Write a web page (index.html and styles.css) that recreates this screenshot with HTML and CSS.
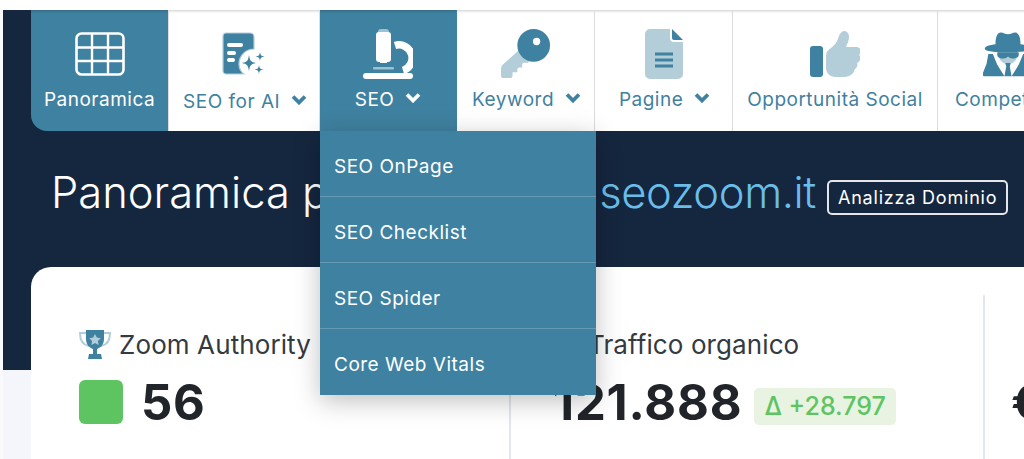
FILE: index.html
```html
<!DOCTYPE html>
<html lang="it">
<head>
	<meta charset="utf-8">
	<title>Panoramica</title>
	<link rel="stylesheet" href="styles.css">
</head>
<body>
	<div class="main">
		<!--menu principale-->
		<div class="nav">
			<a class="nav-item nav-first is-active" href="#">
				<svg class="nav-icon" viewBox="0 0 50 44"><rect x="1.5" y="1.5" width="47" height="41" rx="5" fill="none" stroke="#fff" stroke-width="2.6"/><path d="M17 2v40M33 2v40M2 15.5h46M2 29h46" stroke="#fff" stroke-width="2.4" fill="none"/></svg>
				<span class="nav-label">Panoramica</span>
			</a>
			<a class="nav-item nav-ai" href="#">
				<svg class="nav-icon" viewBox="0 0 44 44"><path d="M4 1h24a4 4 0 0 1 4 4v12a15 15 0 0 0-15 15c0 4 2 8 5 10H4a3 3 0 0 1-3-3V4a3 3 0 0 1 3-3z" fill="#3f81a0" stroke="#b3cdd9" stroke-width="1.2"/><rect x="5" y="11" width="16" height="4" rx="2" fill="#fff"/><rect x="5" y="19" width="9" height="4" rx="2" fill="#fff"/><rect x="5" y="26" width="8" height="4" rx="2" fill="#fff"/><path d="M27 23c1 6 2 7 7 8-5 1-6 2-7 8-1-6-2-7-7-8 5-1 6-2 7-8z" fill="#3f81a0"/><path d="M38 20c.6 3.500 1 4 4.500 4.500-3.500.5-3.900 1-4.500 4.500-.6-3.500-1-4-4.500-4.500 3.500-.5 3.900-1 4.500-4.500zM37 33c.6 3.500 1 4 4.500 4.500-3.500.5-3.900 1-4.500 4.500-.6-3.500-1-4-4.500-4.500 3.500-.5 3.900-1 4.500-4.500z" fill="#3f81a0"/></svg>
				<span class="nav-label">SEO for AI <svg class="chev" viewBox="0 0 16 11"><path d="M2 2.500l6 6 6-6" fill="none" stroke="currentColor" stroke-width="3.800"/></svg></span>
			</a>
			<a class="nav-item nav-seo is-active" href="#">
				<svg class="nav-icon nav-icon-tall" viewBox="0 0 50 50"><rect x="15" y="0" width="11" height="8" rx="3" fill="#9fc0cf"/><path d="M13 6a3 3 0 0 1 3-3h9a3 3 0 0 1 3 3v24a3 3 0 0 1-3 3h-1v1h-7v-1h-1a3 3 0 0 1-3-3z" fill="#fff"/><path d="M32 16.500a13 13 0 0 1 8 25" fill="none" stroke="#fff" stroke-width="7.500"/><rect x="10" y="38" width="21" height="2.500" rx="1" fill="#9fc0cf"/><rect x="0" y="44" width="50" height="6" rx="3" fill="#fff"/></svg>
				<span class="nav-label">SEO <svg class="chev" viewBox="0 0 16 11"><path d="M2 2.500l6 6 6-6" fill="none" stroke="currentColor" stroke-width="3.800"/></svg></span>
			</a>
			<a class="nav-item nav-kw" href="#">
				<svg class="nav-icon nav-icon-tall" viewBox="0 0 52 52"><path d="M22 19L2 37a5 5 0 0 0-2 4v8a2 2 0 0 0 2 2h7a3 3 0 0 0 3-3v-3h5v-3a2 2 0 0 1 2-2h3v-3a2 2 0 0 1 2-2h4l5-5z" fill="#b3cdd9"/><circle cx="34" cy="17" r="17" fill="#3f81a0"/><circle cx="37" cy="13" r="3.800" fill="#fff"/></svg>
				<span class="nav-label">Keyword <svg class="chev" viewBox="0 0 16 11"><path d="M2 2.500l6 6 6-6" fill="none" stroke="currentColor" stroke-width="3.800"/></svg></span>
			</a>
			<a class="nav-item nav-pag" href="#">
				<svg class="nav-icon nav-icon-tall" viewBox="0 0 38 50"><path d="M5 0h20v9a4 4 0 0 0 4 4h9v32a5 5 0 0 1-5 5H5a5 5 0 0 1-5-5V5a5 5 0 0 1 5-5z" fill="#b3cdd9"/><path d="M27 0l11 11H29a2 2 0 0 1-2-2z" fill="#3f81a0"/><path d="M10 25h18M10 31h18M10 37h18" stroke="#3f81a0" stroke-width="3" fill="none"/></svg>
				<span class="nav-label">Pagine <svg class="chev" viewBox="0 0 16 11"><path d="M2 2.500l6 6 6-6" fill="none" stroke="currentColor" stroke-width="3.800"/></svg></span>
			</a>
			<a class="nav-item nav-soc" href="#">
				<svg class="nav-icon nav-icon-tall" viewBox="0 0 50 46"><rect x="0" y="15" width="13" height="31" rx="3" fill="#3f81a0"/><path d="M16 25c0-4 2-6 5-8 4-3 6-6 8-12 1-3 3-5 6-5 3 1 4 3 4 6 0 4-2 7-3 10h10c3 0 5 2 5 4s-1 3-2 4c1 1 2 2 1 4 0 2-1 3-3 4 1 2 0 5-2 6-1 1-1 4-3 5-2 2-5 3-8 3h-8c-6 0-10-4-10-9z" fill="#b3cdd9"/></svg>
				<span class="nav-label">Opportunità Social</span>
			</a>
			<a class="nav-item nav-comp" href="#">
				<svg class="nav-icon nav-icon-tall" viewBox="0 0 56 50"><path d="M14 14c0-8 2-13 6-13 3 0 5 2 8 2s5-2 8-2c4 0 6 5 6 13 6 1 12 2 12 5s-12 4-26 4S2 22 2 19s6-4 12-5z" fill="#3f81a0"/><path d="M17 23h22c0 8-4 13-11 13s-11-5-11-13z" fill="#b3cdd9"/><path d="M16 23h24v3c0 3-4 4-7 4-3 0-4-2-5-2s-2 2-5 2c-3 0-7-1-7-4z" fill="#3f81a0"/><path d="M6 25l5 0 5 12 8 13H2c-2 0-3-2-2-4l4-10zM50 25h-5l-5 12-8 13h22c2 0 3-2 2-4l-4-10z" fill="#3f81a0"/><path d="M25 35h6l-1 4 2 11h-8l2-11z" fill="#3f81a0"/></svg>
				<span class="nav-label">Competitor</span>
			</a>

			<div class="drop">
				<a class="drop-item" href="#">SEO OnPage</a>
				<a class="drop-item" href="#">SEO Checklist</a>
				<a class="drop-item" href="#">SEO Spider</a>
				<a class="drop-item" href="#">Core Web Vitals</a>
			</div>
		</div>

		<div class="head">
			<h1 class="head-title">Panoramica per <span class="head-domain">www.seozoom.it</span></h1>
			<a class="head-btn" href="#">Analizza Dominio</a>
		</div>

		<div class="card">
			<div class="stat stat-first">
				<div class="stat-title">
					<svg class="trophy" viewBox="0 0 32 30"><path d="M7 3H1c0 8 3 12 9 13M25 3h6c0 8-3 12-9 13" fill="none" stroke="#b3cdd9" stroke-width="2"/><path d="M7 0h18v9c0 6-4 9-7 10v5h4l1 5H9l1-5h4v-5C11 18 7 15 7 9z" fill="#3f81a0"/><path d="M16 4l1.800 3.600 4 .6-2.900 2.800.7 4-3.600-1.900-3.600 1.900.7-4-2.900-2.800 4-.6z" fill="#b3cdd9"/></svg>
					Zoom Authority
				</div>
				<div class="stat-row">
					<span class="stat-square"></span>
					<span class="stat-value">56</span>
				</div>
			</div>
			<div class="stat stat-second">
				<div class="stat-title">
					<svg class="trophy" viewBox="0 0 32 30"><path d="M2 28L12 14l7 7L30 4" fill="none" stroke="#3f81a0" stroke-width="3"/></svg>
					Traffico organico
				</div>
				<div class="stat-row">
					<span class="stat-value">121.888</span>
					<span class="stat-delta">Δ +28.797</span>
				</div>
			</div>
			<div class="stat stat-third">
				<div class="stat-title">&nbsp;</div>
				<div class="stat-row">
					<span class="stat-value">€</span>
				</div>
			</div>
		</div>
	</div>
</body>
</html>
```

FILE: styles.css
```css
html,body{
	margin: 0;
	padding: 0;
	height: 100%;
	overflow: hidden;
}
body{
	background: #fff;
	font-family: Inter, "Liberation Sans", sans-serif;
	color: #212529;
}
a{
	text-decoration: none;
}
.main{
	margin: 10px 0 0 3px;
	height: 449px;
	padding-left: 28px;
	background: linear-gradient(#15263f 360px, #f5f6fb 360px);
	box-shadow: -3px 0 0 #fafafd;
}
.nav{
	display: flex;
	height: 121px;
	position: relative;
}
.nav-item{
	flex: none;
	box-sizing: border-box;
	display: flex;
	flex-direction: column;
	align-items: center;
	background: #fff;
	color: #3f81a0;
	border-right: 1px solid #ddd;
	box-shadow: inset 0 3px 3px -2px rgba(0,0,0,.2);
	padding-top: 22px;
	white-space: nowrap;
}
.nav-item.is-active{
	background: #3f81a0;
	color: #fff;
	border-right-color: #3f81a0;
}
.nav-first{
	width: 138px;
	border-bottom-left-radius: 16px;
}
.nav-item.nav-first{
	border-right-color: #ddd;
}
.nav-ai{
	width: 151px;
}
.nav-ai .nav-label{
	margin-top: 14px;
	padding-left: 2px;
}
.nav-seo{
	width: 137px;
}
.nav-kw,.nav-pag{
	width: 138px;
}
.nav-kw .nav-label,.nav-pag .nav-label{
	padding-left: 2px;
}
.nav-soc{
	width: 205px;
}
.nav-comp{
	width: 140px;
}
.nav-icon{
	width: 50px;
	height: 44px;
	flex: none;
}
.nav-icon-tall{
	height: 50px;
	margin-top: -3px;
}
.nav-label{
	margin-top: 12px;
	font-size: 19px;
	line-height: 24px;
	letter-spacing: .5px;
}
.nav-icon-tall + .nav-label{
	margin-top: 9px;
}
.chev{
	width: 16px;
	height: 11px;
	margin-left: 5px;
	vertical-align: 3px;
}
.drop{
	position: absolute;
	left: 289px;
	top: 121px;
	width: 276px;
	background: #3f81a0;
	box-shadow: 0 6px 24px rgba(0,0,0,.25);
	z-index: 10;
}
.drop-item{
	display: block;
	box-sizing: border-box;
	height: 66px;
	line-height: 72px;
	padding-left: 14px;
	font-size: 19px;
	letter-spacing: .5px;
	color: #fff;
	border-bottom: 1px solid #669ab3;
}
.drop-item:last-child{
	border-bottom: none;
}
.head{
	display: flex;
	align-items: center;
	box-sizing: border-box;
	height: 136px;
	padding: 0 0 14px 20px;
	gap: 11px;
}
.head-title{
	margin: 0;
	font-size: 43.5px;
	font-weight: 300;
	color: #fff;
	white-space: nowrap;
}
.head-domain{
	margin-left: 104px;
	letter-spacing: -.4px;
	color: #69bde8;
}
.head-btn{
	border: 2px solid #e4e6ea;
	border-radius: 5px;
	padding: 5px 9px;
	font-size: 18px;
	letter-spacing: .8px;
	color: #fff;
	white-space: nowrap;
	margin-top: 10px;
}
.card{
	display: flex;
	background: #fff;
	border-top-left-radius: 20px;
	height: 192px;
	padding-top: 28px;
	box-sizing: border-box;
	overflow: hidden;
}
.stat{
	flex: none;
	box-sizing: border-box;
	padding-top: 33px;
	border-left: 2px solid #e4e6ef;
}
.stat-first{
	width: 478px;
	padding-left: 48px;
	border-left: none;
}
.stat-second{
	width: 474px;
	padding-left: 42px;
}
.stat-second .stat-title{
	gap: 3px;
}
.stat-third{
	width: 200px;
	padding-left: 26px;
}
.stat-title{
	display: flex;
	align-items: center;
	gap: 8px;
	font-size: 26px;
	letter-spacing: .1px;
	line-height: 34px;
	color: #343a40;
}
.trophy{
	width: 32px;
	height: 30px;
}
.stat-row{
	display: flex;
	align-items: center;
	margin-top: 16px;
	height: 48px;
}
.stat-square{
	width: 44px;
	height: 44px;
	border-radius: 6px;
	background: #5ec462;
	margin-right: 18px;
}
.stat-value{
	font-size: 49px;
	font-weight: 700;
	letter-spacing: .8px;
	color: #212529;
}
.stat-delta{
	margin: 9px 0 0 12px;
	padding: 0 10px;
	height: 37px;
	line-height: 37px;
	border-radius: 5px;
	background: #e8f3e2;
	color: #5ec462;
	font-size: 25px;
	font-weight: 500;
}
```
